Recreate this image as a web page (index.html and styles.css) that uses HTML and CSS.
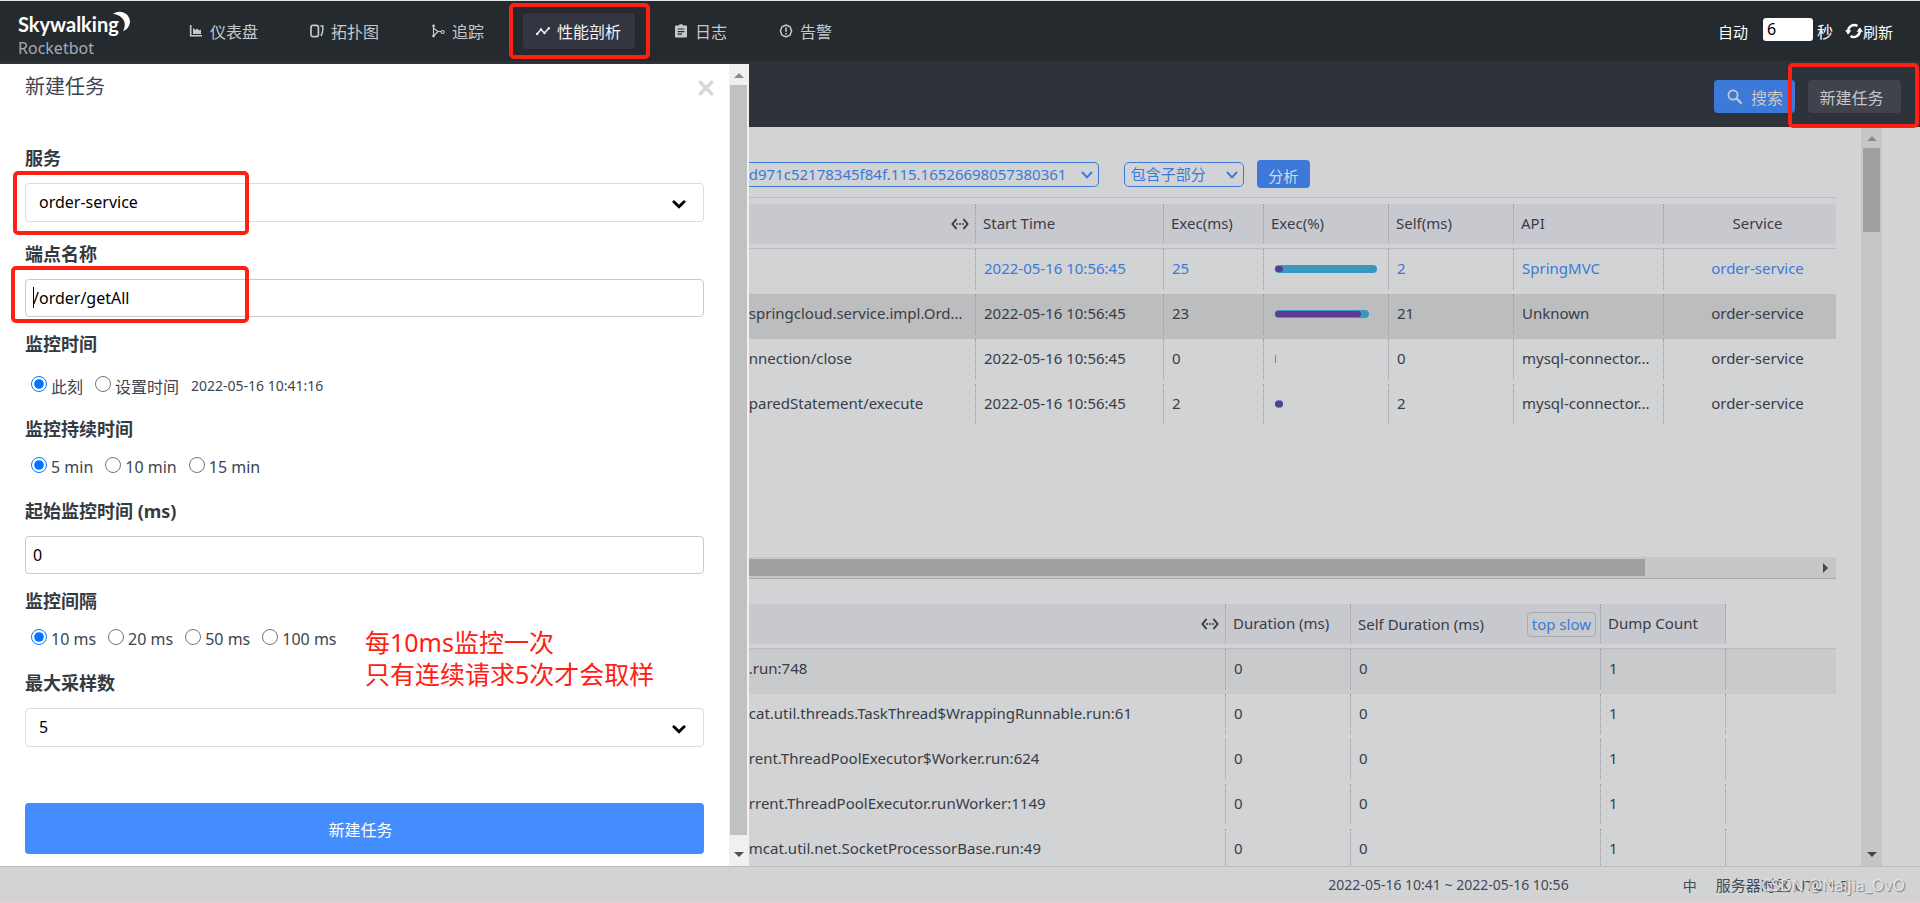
FILE: index.html
```html
<!DOCTYPE html>
<html lang="zh-CN">
<head>
<meta charset="utf-8">
<title>Skywalking Rocketbot</title>
<link rel="stylesheet" href="styles.css">
</head>
<body>
<div class="app">
  <header class="header">
    <a class="logo" href="#">
      <svg class="logo-mark" viewBox="0 0 114 30" role="img" aria-label="Skywalking">
        <text x="0" y="22" class="logo-word">Skywalking</text>
        <path d="M95 4C102-1 111 3 112 11C112 16 109 20 105 21C108 16 107 11 104 8C101 5 98 4 95 4Z" fill="#fff"/>
      </svg>
      <span class="logo-sub">Rocketbot</span>
    </a>
    <nav class="nav">
      <a class="nav-item" href="#">
        <svg class="icon" viewBox="0 0 14 14"><path d="M1.7 1V11.8H13" fill="none" stroke="currentColor" stroke-width="1.6"/><path d="M4 10V4L6.5 6L8.5 4.5L10 6.5L12 5.5V10Z" fill="currentColor"/></svg>仪表盘</a>
      <a class="nav-item" href="#">
        <svg class="icon" viewBox="0 0 14 14"><rect x="1" y="1.4" width="7.4" height="11.2" rx="1.8" fill="none" stroke="currentColor" stroke-width="1.7"/><path d="M10.4 2H12.8C13.2 6 12.8 9 11 12" fill="none" stroke="currentColor" stroke-width="1.5"/></svg>拓扑图</a>
      <a class="nav-item" href="#">
        <svg class="icon" viewBox="0 0 14 14"><path d="M2.5 2V12M3 4.5L7 7.5H10M3 11.5L7 7.5" fill="none" stroke="currentColor" stroke-width="1.2"/><circle cx="2.6" cy="1.9" r="1.4" fill="currentColor"/><circle cx="2.6" cy="12.1" r="1.4" fill="currentColor"/><circle cx="11.6" cy="8" r="1.5" fill="none" stroke="currentColor" stroke-width="1.2"/></svg>追踪</a>
      <a class="nav-item nav-item--active" href="#">
        <svg class="icon" viewBox="0 0 14 14"><path d="M1 10L5 5.5L8.5 9L13 4" fill="none" stroke="currentColor" stroke-width="1.5"/><circle cx="1.2" cy="10" r="1.2" fill="currentColor"/><circle cx="5" cy="5.5" r="1.2" fill="currentColor"/><circle cx="8.5" cy="9" r="1.2" fill="currentColor"/><circle cx="12.8" cy="4.2" r="1.2" fill="currentColor"/></svg>性能剖析
        <span class="mark mark--nav"></span></a>
      <a class="nav-item" href="#">
        <svg class="icon" viewBox="0 0 14 14"><path fill-rule="evenodd" fill="currentColor" d="M2 1.5H4.7C5.2-.1 8.8-.1 9.3 1.5H12Q13 1.5 13 2.5V12.5Q13 13.5 12 13.5H2Q1 13.5 1 12.5V2.5Q1 1.5 2 1.5ZM3.6 4.4V5.6H10.4V4.4ZM3.6 7V8.2H10.4V7ZM3.6 9.6V10.8H8V9.6Z"/></svg>日志</a>
      <a class="nav-item" href="#">
        <svg class="icon" viewBox="0 0 14 14"><path d="M7 1L11 2.7L12.6 7L11 11.3L7 13L3 11.3L1.4 7L3 2.7Z" fill="none" stroke="currentColor" stroke-width="1.5"/><path d="M7 3.6V7.8M7 9V10.6" stroke="currentColor" stroke-width="1.6"/></svg>告警</a>
    </nav>
    <div class="auto">
      <label for="auto-sec">自动</label>
      <input id="auto-sec" class="auto-input" type="text" value="6">
      <span class="unit">秒</span>
      <button class="refresh" type="button"><svg class="icon-refresh" viewBox="0 0 18 18"><g fill="none" stroke="currentColor" stroke-width="2.4"><path d="M3.2 9A6 6 0 0 1 12.5 4M14.8 9A6 6 0 0 1 5.5 14"/><path d="M3 8.6A6 6 0 0 0 3.6 11.6M15 9.4A6 6 0 0 0 14.4 6.4"/></g><path d="M0 8.2H6.4L3.2 12.2ZM11.6 9.8H18L14.8 5.8Z" fill="currentColor"/></svg>刷新</button>
    </div>
  </header>

  <div class="workspace">
    <aside class="drawer">
      <form class="form">
        <div class="form-head">
          <h1 class="form-title">新建任务</h1>
          <button class="close" type="button" aria-label="close"><svg viewBox="0 0 14 14"><path d="M2 2L12 12M12 2L2 12" fill="none" stroke="#d8d8d8" stroke-width="3" stroke-linecap="round"/></svg></button>
        </div>
        <div class="field field--select">
          <label class="label" for="service">服务</label>
          <div class="select-wrap">
            <select id="service" class="select"><option>order-service</option></select>
            <svg class="caret" viewBox="0 0 12 8"><path d="M1.5 1.5L6 6L10.5 1.5" fill="none" stroke="#000" stroke-width="2.6" stroke-linecap="round"/></svg>
            <span class="mark mark--service"></span>
          </div>
        </div>
        <div class="field">
          <label class="label" for="endpoint">端点名称</label>
          <div class="select-wrap">
            <input id="endpoint" class="input" type="text" value="/order/getAll">
            <span class="text-cursor"></span>
            <span class="mark mark--endpoint"></span>
          </div>
        </div>
        <fieldset class="field">
          <legend class="label">监控时间</legend>
          <div class="radios radios--dated">
            <label class="radio"><input type="radio" name="time" checked>此刻</label>
            <label class="radio"><input type="radio" name="time">设置时间</label>
            <span class="date">2022-05-16 10:41:16</span>
          </div>
        </fieldset>
        <fieldset class="field field--radios">
          <legend class="label">监控持续时间</legend>
          <div class="radios">
            <label class="radio"><input type="radio" name="duration" checked>5 min</label>
            <label class="radio"><input type="radio" name="duration">10 min</label>
            <label class="radio"><input type="radio" name="duration">15 min</label>
          </div>
        </fieldset>
        <div class="field">
          <label class="label" for="threshold">起始监控时间 (ms)</label>
          <input id="threshold" class="input" type="text" value="0">
        </div>
        <fieldset class="field field--radios">
          <legend class="label">监控间隔</legend>
          <div class="radios">
            <label class="radio"><input type="radio" name="interval" checked>10 ms</label>
            <label class="radio"><input type="radio" name="interval">20 ms</label>
            <label class="radio"><input type="radio" name="interval">50 ms</label>
            <label class="radio"><input type="radio" name="interval">100 ms</label>
            <p class="note">每10ms监控一次<br>只有连续请求5次才会取样</p>
          </div>
        </fieldset>
        <div class="field">
          <label class="label" for="samples">最大采样数</label>
          <div class="select-wrap">
            <select id="samples" class="select"><option>5</option></select>
            <svg class="caret" viewBox="0 0 12 8"><path d="M1.5 1.5L6 6L10.5 1.5" fill="none" stroke="#000" stroke-width="2.6" stroke-linecap="round"/></svg>
          </div>
        </div>
        <button class="submit" type="button">新建任务</button>
      </form>
      <div class="vbar vbar--light">
        <i class="arrow arrow--up"></i><span class="vthumb"></span><i class="arrow arrow--down"></i>
      </div>
    </aside>

    <main class="main">
      <div class="toolbar">
        <button class="btn-search" type="button"><svg viewBox="0 0 16 16"><circle cx="6" cy="6" r="4.6" fill="none" stroke="currentColor" stroke-width="1.8"/><path d="M9.4 9.4L14.6 14.6" stroke="currentColor" stroke-width="2.2"/></svg>搜索</button>
        <button class="btn-task" type="button">新建任务<span class="mark mark--task"></span></button>
      </div>
      <div class="content">
        <div class="panels">
          <div class="filters">
            <div class="pick pick--trace">
              <select class="pick-select" aria-label="trace"><option>d971c52178345f84f.115.16526698057380361</option></select>
              <svg class="pick-caret" viewBox="0 0 12 8"><path d="M1 1L6 6.4L11 1" fill="none" stroke="currentColor" stroke-width="2"/></svg>
            </div>
            <div class="pick pick--mode">
              <select class="pick-select" aria-label="mode"><option>包含子部分</option></select>
              <svg class="pick-caret" viewBox="0 0 12 8"><path d="M1 1L6 6.4L11 1" fill="none" stroke="currentColor" stroke-width="2"/></svg>
            </div>
            <button class="btn-analyze" type="button">分析</button>
          </div>
          <div class="spans">
            <table class="table">
              <colgroup><col><col class="c-time"><col class="c-exec"><col class="c-num"><col class="c-num"><col class="c-api"><col class="c-service"></colgroup>
              <thead>
                <tr>
                  <th><div class="cell cell--resize"><svg viewBox="0 0 18 12"><path d="M5.5 1L1.5 6L5.5 11M12.5 1L16.5 6L12.5 11" fill="none" stroke="currentColor" stroke-width="2"/><path d="M5 6H13" stroke="currentColor" stroke-width="1.6" stroke-dasharray="2 1"/></svg></div></th>
                  <th><div class="cell">Start Time</div></th>
                  <th><div class="cell">Exec(ms)</div></th>
                  <th><div class="cell">Exec(%)</div></th>
                  <th><div class="cell">Self(ms)</div></th>
                  <th><div class="cell">API</div></th>
                  <th><div class="cell cell--last">Service</div></th>
                </tr>
              </thead>
              <tbody>
                <tr class="row--link">
                  <td><div class="cell cell--name"></div></td><td><div class="cell">2022-05-16 10:56:45</div></td><td><div class="cell">25</div></td>
                  <td><div class="cell cell--bar"><span class="bar" style="width:100%"><span class="bar-self" style="width:8%"></span></span></div></td>
                  <td><div class="cell">2</div></td><td><div class="cell">SpringMVC</div></td><td><div class="cell cell--last">order-service</div></td>
                </tr>
                <tr class="row--selected">
                  <td><div class="cell cell--name">springcloud.service.impl.Ord...</div></td><td><div class="cell">2022-05-16 10:56:45</div></td><td><div class="cell">23</div></td>
                  <td><div class="cell cell--bar"><span class="bar" style="width:92%"><span class="bar-self" style="width:92%"></span></span></div></td>
                  <td><div class="cell">21</div></td><td><div class="cell">Unknown</div></td><td><div class="cell cell--last">order-service</div></td>
                </tr>
                <tr>
                  <td><div class="cell cell--name">nnection/close</div></td><td><div class="cell">2022-05-16 10:56:45</div></td><td><div class="cell">0</div></td>
                  <td><div class="cell cell--bar"><span class="bar" style="width:1%"></span></div></td>
                  <td><div class="cell">0</div></td><td><div class="cell">mysql-connector...</div></td><td><div class="cell cell--last">order-service</div></td>
                </tr>
                <tr>
                  <td><div class="cell cell--name">paredStatement/execute</div></td><td><div class="cell">2022-05-16 10:56:45</div></td><td><div class="cell">2</div></td>
                  <td><div class="cell cell--bar"><span class="bar" style="width:8%"><span class="bar-self" style="width:100%"></span></span></div></td>
                  <td><div class="cell">2</div></td><td><div class="cell">mysql-connector...</div></td><td><div class="cell cell--last">order-service</div></td>
                </tr>
              </tbody>
            </table>
            <div class="hbar"><span class="hthumb"></span><i class="arrow arrow--right"></i></div>
          </div>
          <table class="table">
            <colgroup><col><col class="c-num"><col class="c-self"><col class="c-num"><col class="c-rest"></colgroup>
            <thead>
              <tr>
                <th><div class="cell cell--resize"><svg viewBox="0 0 18 12"><path d="M5.5 1L1.5 6L5.5 11M12.5 1L16.5 6L12.5 11" fill="none" stroke="currentColor" stroke-width="2"/><path d="M5 6H13" stroke="currentColor" stroke-width="1.6" stroke-dasharray="2 1"/></svg></div></th>
                <th><div class="cell">Duration (ms)</div></th>
                <th><div class="cell cell--split">Self Duration (ms)<button class="top-slow" type="button">top slow</button></div></th>
                <th><div class="cell">Dump Count</div></th>
                <th></th>
              </tr>
            </thead>
            <tbody>
              <tr class="row--hover"><td><div class="cell cell--name">.run:748</div></td><td><div class="cell">0</div></td><td><div class="cell">0</div></td><td><div class="cell">1</div></td><td></td></tr>
              <tr><td><div class="cell cell--name">cat.util.threads.TaskThread$WrappingRunnable.run:61</div></td><td><div class="cell">0</div></td><td><div class="cell">0</div></td><td><div class="cell">1</div></td><td></td></tr>
              <tr><td><div class="cell cell--name">rent.ThreadPoolExecutor$Worker.run:624</div></td><td><div class="cell">0</div></td><td><div class="cell">0</div></td><td><div class="cell">1</div></td><td></td></tr>
              <tr><td><div class="cell cell--name">rrent.ThreadPoolExecutor.runWorker:1149</div></td><td><div class="cell">0</div></td><td><div class="cell">0</div></td><td><div class="cell">1</div></td><td></td></tr>
              <tr><td><div class="cell cell--name">mcat.util.net.SocketProcessorBase.run:49</div></td><td><div class="cell">0</div></td><td><div class="cell">0</div></td><td><div class="cell">1</div></td><td></td></tr>
            </tbody>
          </table>
        </div>
        <div class="vbar vbar--dim">
          <i class="arrow arrow--up"></i><span class="vthumb vthumb--short"></span><i class="arrow arrow--down"></i>
        </div>
      </div>
    </main>
  </div>

  <footer class="footer">
    <span class="range">2022-05-16 10:41 ~ 2022-05-16 10:56</span>
    <span class="lang">中</span>
    <span class="zone">服务器时区 UTC + 8</span>
    <span class="watermark">CSDN @Naijia_OvO</span>
  </footer>
</div>
</body>
</html>
```
FILE: styles.css
```css
* { box-sizing: border-box; }

body {
  margin: 0;
  font-family: "Noto Sans", "Noto Sans CJK SC", sans-serif;
  font-size: 15px;
  color: #3a3c46;
}

button, input, select { font: inherit; color: inherit; margin: 0; }
button { border: 0; padding: 0; background: none; }
a { color: inherit; text-decoration: none; }
svg { display: block; flex: none; }

.app {
  height: 100vh;
  display: flex;
  flex-direction: column;
  overflow: hidden;
  background: #d1d3d5;
}

/* header */
.header {
  flex: none;
  height: 64px;
  display: flex;
  align-items: center;
  padding: 0 27px 0 18px;
  background: #252a2e;
  border-top: 1px solid #dfe3e3;
  border-bottom: 3px solid #2e323b;
  color: #c6c8ca;
  font-size: 16px;
}

.logo { width: 158px; display: flex; flex-direction: column; padding-top: 4px; }
.logo-mark { width: 114px; height: 30px; overflow: visible; }
.logo-word { font: 700 20px Lato, "Noto Sans", sans-serif; fill: #fff; }
.logo-sub { line-height: 16px; color: #a3abb9; }

.nav { flex: 1; display: flex; gap: 26px; }
.nav-item {
  position: relative;
  height: 36px;
  display: flex;
  align-items: center;
  gap: 7px;
  padding: 0 13px;
  border-radius: 4px;
}
.nav-item--active { background: #333641; color: #f2f2f4; padding-right: 14px; }
.icon { width: 14px; height: 14px; }

.auto { display: flex; align-items: center; color: #fff; font-size: 15px; }
.auto-input {
  width: 50px;
  height: 23px;
  margin: 0 4px 4px 15px;
  padding: 0 4px;
  border: 0;
  border-radius: 3px;
  background: #fff;
  color: #000;
  font-size: 16px;
}
.unit { font-size: 16px; }
.refresh { display: flex; align-items: center; margin-left: 12px; }
.icon-refresh { width: 18px; height: 18px; }

/* highlight frames */
.mark {
  position: absolute;
  border: 4px solid #ff2014;
  border-radius: 5px;
  pointer-events: none;
  z-index: 3;
}
.mark--nav { inset: -10px -15px -10px -14px; }
.mark--service { left: -12px; top: -12px; width: 236px; height: 64px; }
.mark--endpoint { left: -14px; top: -13px; width: 238px; height: 57px; }
.mark--task { inset: -17px -18px -15px -20px; }

.workspace { flex: 1; min-height: 0; display: flex; }

/* drawer */
.drawer { flex: 0 0 39%; display: flex; background: #fff; }
.form { flex: 1; padding: 7px 25px 12px; overflow: hidden; }
.form-head { height: 75px; display: flex; justify-content: space-between; align-items: flex-start; }
.form-title { margin: 0; font-size: 20px; font-weight: 400; line-height: 32px; color: #3d444f; }
.close { margin-top: 9px; margin-right: -10px; }
.close svg { width: 16px; height: 16px; }

.field { border: 0; margin: 0 0 15px; padding: 0; min-width: 0; }
.field--select { margin-bottom: 20px; }
.field--radios { margin-bottom: 21px; }
.label {
  display: block;
  padding: 0;
  margin-bottom: 13px;
  font-size: 18px;
  line-height: 24px;
  font-weight: 700;
  color: #333a42;
}
.select-wrap { position: relative; }
.input, .select {
  display: block;
  width: 100%;
  height: 38px;
  border: 1px solid #cacaca;
  border-radius: 4px;
  background: #fff;
  color: #000;
  font-size: 16px;
  padding: 0 7px;
}
.select { appearance: none; height: 39px; padding: 0 13px 2px; border-color: #dcdcdc; }
.caret { position: absolute; right: 18px; top: 17px; width: 14px; height: 9px; }
.text-cursor { position: absolute; left: 8px; top: 8px; width: 1px; height: 21px; background: #000; }

.radios {
  position: relative;
  display: flex;
  align-items: center;
  gap: 12px;
  height: 26px;
  margin-bottom: -2px;
  padding-left: 6px;
  font-size: 16px;
  color: #3d444f;
}
.radios--dated { height: 33px; margin-bottom: 0; }
.radio { display: flex; align-items: center; }
.radio input { width: 16px; height: 16px; margin: 0 4px 4px 0; }
.date { font-size: 14px; }
.note {
  position: absolute;
  left: 340px;
  top: 0;
  margin: 0;
  white-space: nowrap;
  font-size: 25px;
  line-height: 32px;
  color: #ff2014;
}
.submit {
  display: block;
  width: 100%;
  height: 51px;
  margin-top: 56px;
  padding-right: 8px;
  border-radius: 4px;
  background: #448dfe;
  color: #fff;
  font-size: 16px;
}

/* scrollbars */
.vbar { flex: none; display: flex; flex-direction: column; align-items: center; }
.vbar--light { width: 20px; padding: 9px 1px; background: #f0f0f0; color: #505050; }
.vbar--dim { width: 21px; margin-right: 38px; padding: 9px 2px; background: #c5c6c8; color: #454649; }
.vthumb { width: 17px; flex: 1; margin: 7px 0 17px; background: #c1c1c1; }
.vthumb--short { flex: 0 0 84px; margin-bottom: auto; background: #9fa0a1; }
.arrow { width: 0; height: 0; border: 5px solid transparent; }
.arrow--up { border-top: 0; border-bottom-color: #8b8c8e; }
.arrow--down { border-bottom: 0; border-top-color: currentColor; }
.arrow--right { border-right: 0; border-left-color: #454649; }

/* main */
.main { flex: 1; min-width: 0; display: flex; flex-direction: column; }
.toolbar {
  flex: none;
  height: 63px;
  display: flex;
  justify-content: flex-end;
  align-items: center;
  gap: 13px;
  padding: 2px 19px 0 0;
  background: #2e323b;
  color: #c6c8ca;
  font-size: 16px;
}
.btn-search {
  width: 81px;
  height: 33px;
  display: flex;
  align-items: center;
  gap: 8px;
  padding-left: 13px;
  border-radius: 4px;
  background: #3d79d9;
}
.btn-search svg { width: 16px; height: 16px; }
.btn-task { position: relative; width: 93px; height: 33px; padding-right: 6px; border-radius: 4px; background: #40424c; }

.content { flex: 1; min-height: 0; display: flex; }
.panels { flex: 1; min-width: 0; margin-right: 25px; overflow: hidden; }
.filters {
  height: 71px;
  display: flex;
  align-items: center;
  padding-top: 24px;
  border-bottom: 1px solid #b9bbbd;
  color: #3d79d9;
}
.pick { position: relative; }
.pick-select {
  appearance: none;
  display: block;
  width: 100%;
  height: 25px;
  border: 1px solid currentColor;
  border-radius: 5px;
  background: transparent;
  padding: 0 6px;
}
.pick--trace { width: 350px; margin-right: 25px; }
.pick--trace .pick-select { padding: 0; border-left: 0; border-radius: 0 5px 5px 0; }
.pick--mode { width: 120px; margin-right: 13px; }
.pick-caret { position: absolute; right: 6px; top: 9px; width: 12px; height: 8px; }
.btn-analyze { width: 53px; height: 28px; padding-top: 2px; border-radius: 4px; background: #3d79d9; color: #d5dbe4; }

.spans {
  height: 375px;
  margin: 6px 0 25px;
  display: flex;
  flex-direction: column;
  justify-content: space-between;
  border-bottom: 1px solid #a5a7a9;
}

.table { width: 100%; table-layout: fixed; border-collapse: separate; border-spacing: 0; }
.c-time { width: 188px; }
.c-exec { width: 100px; }
.c-num { width: 125px; }
.c-api { width: 150px; }
.c-service { width: 172px; }
.c-self { width: 250px; }
.c-rest { width: 110px; }
.table th, .table td { height: 45px; padding: 0; vertical-align: top; font-weight: 400; text-align: left; }
.table th { border-bottom: 1px solid #b9bbbd; }
.table th .cell { background: #c8c9cf; padding-left: 7px; }
.cell {
  height: 40px;
  line-height: 39px;
  padding-left: 8px;
  border-right: 1px dotted #97989c;
  white-space: nowrap;
  overflow: hidden;
}
.cell--name { padding-left: 0; }
.cell--resize { display: flex; align-items: center; justify-content: flex-end; padding-right: 6px; }
.cell--resize svg { width: 18px; height: 12px; }
.cell--last, .table th .cell--last { border-right: 0; padding: 0 0 0 15px; text-align: center; }
.cell--split { display: flex; align-items: center; justify-content: space-between; padding-right: 4px; }
.top-slow { height: 25px; padding: 0 4px; border: 1px solid #a9abae; border-radius: 4px; line-height: 23px; color: #3d79d9; }
.row--link { color: #3d79d9; }
.row--selected { background: #bbbdbe; }
.row--hover { background: #c9cacc; }
.cell--bar { display: flex; align-items: center; padding: 0 11px; }
.bar { height: 8px; display: flex; align-items: center; border-radius: 4px; background: #3a97c2; }
.bar-self { height: 6px; border-radius: 3px; background: #5d3a96; }

.hbar { height: 21px; display: flex; align-items: center; justify-content: space-between; padding-right: 8px; background: #c5c6c8; }
.hthumb { width: 83%; height: 17px; background: #9fa0a1; }

/* footer */
.footer {
  position: relative;
  flex: none;
  height: 37px;
  display: flex;
  align-items: center;
  justify-content: flex-end;
  padding-right: 72px;
  border-top: 1px solid #babbbd;
  border-bottom: 1px solid #dfd2d6;
  font-size: 14px;
  color: #444a57;
}
.range { margin-right: 114px; }
.lang { margin-right: 19px; }
.zone { font-size: 15px; }
.watermark {
  position: absolute;
  right: 15px;
  font-size: 16px;
  color: #e4e5e6;
  text-shadow: 1px 1px 1px #77797c;
}
```
